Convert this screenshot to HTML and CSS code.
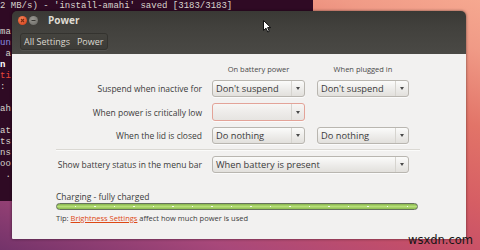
FILE: index.html
```html
<!DOCTYPE html>
<html>
<head>
<meta charset="utf-8">
<link rel="stylesheet" href="styles.css">
</head>
<body>
<div class="desktop">
  <div class="terminal">
    <div class="term-top">2 MB/s) - 'install-amahi' saved [3183/3183]</div>
    <div class="term-lines">
      <div>ma</div>
      <div class="t-blue">un</div>
      <div>&nbsp;a</div>
      <div class="t-bold">n</div>
      <div class="t-red">ti</div>
      <div>:</div>
      <div>&nbsp;</div>
      <div>ah</div>
      <div>&nbsp;</div>
      <div>at</div>
      <div>ts</div>
      <div>ns</div>
      <div>oo</div>
      <div>&nbsp;.</div>
    </div>
  </div>

  <div class="window">
    <div class="header">
      <div class="titlebar">
        <span class="wbtn close"><svg width="9" height="9" viewBox="0 0 9 9"><path d="M3 3 L6 6 M6 3 L3 6" stroke="#7a2a10" stroke-width="1.1"/></svg></span>
        <span class="wbtn min"><svg width="9" height="9" viewBox="0 0 9 9"><path d="M2.5 4.5 H6.5" stroke="#3a3935" stroke-width="1.1"/></svg></span>
        <span class="title">Power</span>
      </div>
      <div class="toolbar">
        <div class="crumbs"><span class="crumb">All Settings</span><span class="crumb">Power</span></div>
      </div>
    </div>
    <div class="content">
      <div class="grid">
        <span></span>
        <span class="colhead">On battery power</span>
        <span class="colhead colhead-r">When plugged in</span>

        <span class="label">Suspend when inactive for</span>
        <div class="combo"><span class="combo-text">Don't suspend</span><span class="combo-arrow"></span></div>
        <div class="combo combo-r"><span class="combo-text">Don't suspend</span><span class="combo-arrow"></span></div>

        <span class="label">When power is critically low</span>
        <div class="combo combo-warn"><span class="combo-text"></span><span class="combo-arrow"></span></div>
        <span></span>

        <span class="label">When the lid is closed</span>
        <div class="combo"><span class="combo-text">Do nothing</span><span class="combo-arrow"></span></div>
        <div class="combo combo-r"><span class="combo-text">Do nothing</span><span class="combo-arrow"></span></div>
      </div>
      <div class="sep"></div>
      <div class="grid grid-wide">
        <span class="label">Show battery status in the menu bar</span>
        <div class="combo"><span class="combo-text">When battery is present</span><span class="combo-arrow"></span></div>
      </div>
      <div class="status">Charging - fully charged</div>
      <div class="bar"></div>
      <div class="tip">Tip: <span class="link">Brightness Settings</span> affect how much power is used</div>
    </div>
  </div>

  <svg class="cursor" width="9" height="13" viewBox="0 0 9 13"><path d="M0.5 0.5 L0.5 10.5 L3 8.2 L4.8 12 L6.3 11.3 L4.6 7.6 L7.8 7.6 Z" fill="#fff" stroke="#111" stroke-width="1"/></svg>
  <div class="watermark">wsxdn.com</div>
</div>
</body>
</html>
```

FILE: styles.css
```css
* { box-sizing: border-box; }
html, body { margin: 0; padding: 0; }
body { width: 480px; height: 250px; overflow: hidden; }

.desktop {
  position: relative;
  width: 480px;
  height: 250px;
  overflow: hidden;
  background: linear-gradient(200deg, #f6a890 0%, #f09a86 12%, #e27468 30%, #d65e64 48%, #c64f68 62%, #a8487a 80%, #73336a 100%);
}

.terminal {
  position: absolute;
  left: 0;
  top: 0;
  width: 313px;
  height: 201px;
  background: #2f0a24;
  font-family: "Liberation Mono", monospace;
  font-size: 9px;
  color: #d8d4cc;
  overflow: hidden;
}
.term-top { line-height: 11px; padding-top: 1px; white-space: pre; }
.term-lines { margin-top: 15px; line-height: 11px; }
.term-lines > div { white-space: pre; height: 11px; }
.t-blue { color: #8c8ce0; }
.t-bold { color: #ffffff; font-weight: bold; }
.t-red { color: #e8473a; }

.window {
  position: absolute;
  left: 12px;
  top: 11px;
  width: 454px;
  height: 228px;
  display: flex;
  flex-direction: column;
  border-radius: 5px 5px 1px 1px;
  box-shadow: 0 0 3px rgba(0,0,0,0.55);
  overflow: hidden;
  font-family: "Open Sans", sans-serif;
}

.header {
  background: linear-gradient(#3a3935, #42413d 40%, #4a4945);
  color: #dfdbd2;
}
.titlebar {
  height: 18px;
  display: flex;
  align-items: center;
  padding-left: 6px;
}
.wbtn {
  width: 9px;
  height: 9px;
  border-radius: 50%;
  display: flex;
}
.close {
  background: radial-gradient(circle at 40% 35%, #f58a5e, #e0532c 60%, #b63f1c);
}
.min {
  margin-left: 2px;
  background: radial-gradient(circle at 40% 35%, #9a9993, #7b7a75 60%, #5e5d58);
}
.title {
  margin-left: 10px;
  font-size: 10px;
  line-height: 14px;
  font-weight: bold;
  color: #dfdbd2;
}
.toolbar {
  height: 25px;
  display: flex;
  align-items: center;
  padding-left: 8px;
}
.crumbs {
  height: 17px;
  display: flex;
  align-items: center;
  border: 1px solid #34332f;
  border-radius: 3px;
  background: linear-gradient(#45443f, #3d3c38);
  box-shadow: 0 1px 0 rgba(255,255,255,0.06);
}
.crumb {
  font-size: 9px;
  color: #dcd8cf;
  padding: 0 3px;
  line-height: 15px;
}
.crumb + .crumb { padding-left: 4px; }

.content {
  flex: 1;
  background: #f2f1f0;
  padding: 10px 46px 0 44px;
  color: #3c3c3c;
}

.grid {
  display: grid;
  grid-template-columns: 146px 93px 94px;
  column-gap: 10px;
  row-gap: 6px;
  align-items: center;
}
.grid-wide {
  grid-template-columns: 146px 197px;
}
.colhead {
  font-size: 7.5px;
  line-height: 10px;
  text-align: center;
  color: #4a4a4a;
}
.colhead-r { padding-left: 2px; }
.label {
  font-size: 8.5px;
  text-align: right;
  color: #3c3c3c;
  white-space: nowrap;
}
.combo {
  height: 17px;
  display: flex;
  border: 1px solid #b9b6b0;
  border-radius: 3px;
  background: linear-gradient(#fbfbfa, #eeedeb 50%, #e2e0dc);
  box-shadow: 0 1px 0 rgba(255,255,255,0.7);
}
.combo-r { margin-left: 2px; }
.combo-warn {
  border-color: #e3a398;
  background: linear-gradient(#f7f6f4, #eeecea 50%, #e6e4e1);
  height: 18px;
}
.combo-text {
  flex: 1;
  font-size: 9.3px;
  line-height: 15px;
  padding-left: 3px;
  color: #3a3a3a;
  white-space: nowrap;
  overflow: hidden;
}
.combo-arrow {
  width: 13px;
  border-left: 1px solid #d6d4cf;
  display: flex;
  align-items: center;
  justify-content: center;
}
.combo-arrow::after {
  content: "";
  border-left: 2.5px solid transparent;
  border-right: 2.5px solid transparent;
  border-top: 3px solid #4a4a4a;
}

.sep {
  height: 2px;
  margin: 5px 0 5px 0;
  border-top: 1px solid #dad8d3;
  border-bottom: 1px solid #fbfbfa;
}

.status {
  margin-top: 18px;
  font-size: 8.5px;
  line-height: 12px;
  color: #3c3c3c;
}
.bar {
  width: 362px;
  height: 7px;
  border: 1px solid #66725d;
  border-radius: 4px;
  background:
    repeating-linear-gradient(to right, transparent 0 18px, rgba(255,255,255,0.85) 18px 19.5px) center / 100% 1px no-repeat,
    linear-gradient(#86b54b, #b7df78 50%, #8cbd50);
}
.tip {
  margin-top: 3px;
  font-size: 7.5px;
  line-height: 11px;
  color: #3c3c3c;
}
.link {
  color: #dd4814;
  text-decoration: underline;
}

.cursor {
  position: absolute;
  left: 263px;
  top: 20px;
}
.watermark {
  position: absolute;
  left: 408px;
  top: 232px;
  font-family: "DejaVu Sans", sans-serif;
  font-size: 11.5px;
  color: #151515;
  line-height: 16px;
}
```
